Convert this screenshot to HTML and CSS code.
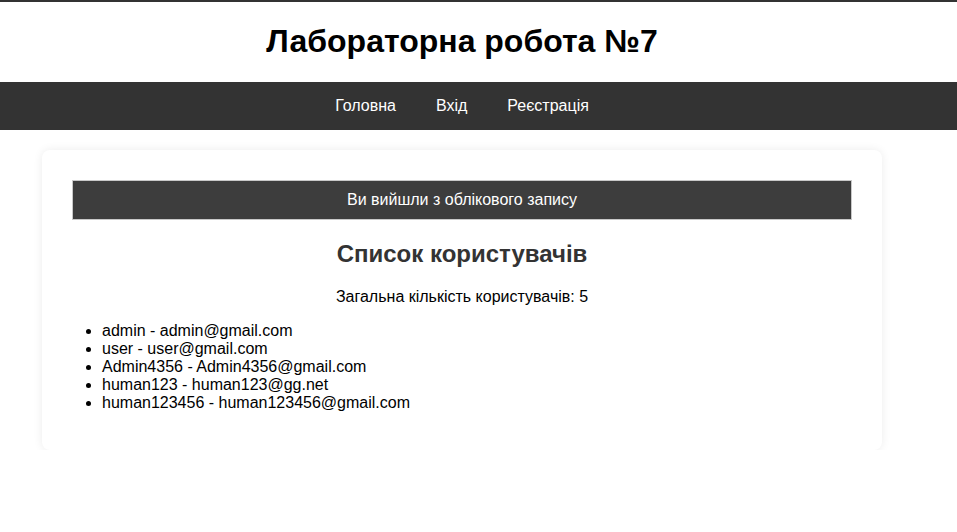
FILE: index.html
```html
<!DOCTYPE html>
<html lang="uk">
<head>
<meta charset="utf-8">
<title>Лабораторна робота №7</title>
<link rel="stylesheet" href="styles.css">
</head>
<body>
<header class="site-header">
  <div class="inner">
    <h1 class="site-title">Лабораторна робота №7</h1>
  </div>
</header>
<nav class="site-nav">
  <ul class="inner nav-list">
    <li><a href="#">Головна</a></li>
    <li><a href="#">Вхід</a></li>
    <li><a href="#">Реєстрація</a></li>
  </ul>
</nav>
<div class="inner">
  <main class="card">
    <div class="message">Ви вийшли з облікового запису</div>
    <h2 class="card-title">Список користувачів</h2>
    <p class="count">Загальна кількість користувачів: 5</p>
    <ul class="users">
      <li>admin - admin@gmail.com</li>
      <li>user - user@gmail.com</li>
      <li>Admin4356 - Admin4356@gmail.com</li>
      <li>human123 - human123@gg.net</li>
      <li>human123456 - human123456@gmail.com</li>
    </ul>
  </main>
</div>
</body>
</html>
```
FILE: styles.css
```css
html, body {
  margin: 0;
  padding: 0;
  background: #fff;
}
body {
  font-family: "Liberation Sans", Arial, sans-serif;
  font-size: 16px;
  color: #000;
  border-top: 2px solid #333;
}
.inner {
  width: 924px;
}
.site-header {
  padding: 21px 0 22px;
}
.site-title {
  margin: 0;
  font-size: 32px;
  line-height: 37px;
  font-weight: bold;
  text-align: center;
}
.site-nav {
  background: #333;
}
.nav-list {
  list-style: none;
  margin: 0;
  padding: 15px 0;
  display: flex;
  justify-content: center;
  gap: 40px;
  line-height: 18px;
}
.nav-list a {
  color: #fff;
  text-decoration: none;
}
.card {
  display: block;
  margin: 20px 42px 0;
  padding: 20px 20px 22px;
  background: #fff;
  border-radius: 8px;
  box-shadow: 0 0 10px rgba(0, 0, 0, 0.08);
}
.message {
  margin: 10px;
  padding: 10px;
  background: #3d3d3d;
  border: 1px solid #c8c8c8;
  color: #fff;
  text-align: center;
  line-height: 18px;
}
.card-title {
  font-size: 24px;
  color: #333;
  text-align: center;
  margin: 20px 0;
}
.count {
  text-align: center;
  margin: 16px 0;
}
.users {
  margin: 16px 0;
  padding-left: 40px;
}
```
